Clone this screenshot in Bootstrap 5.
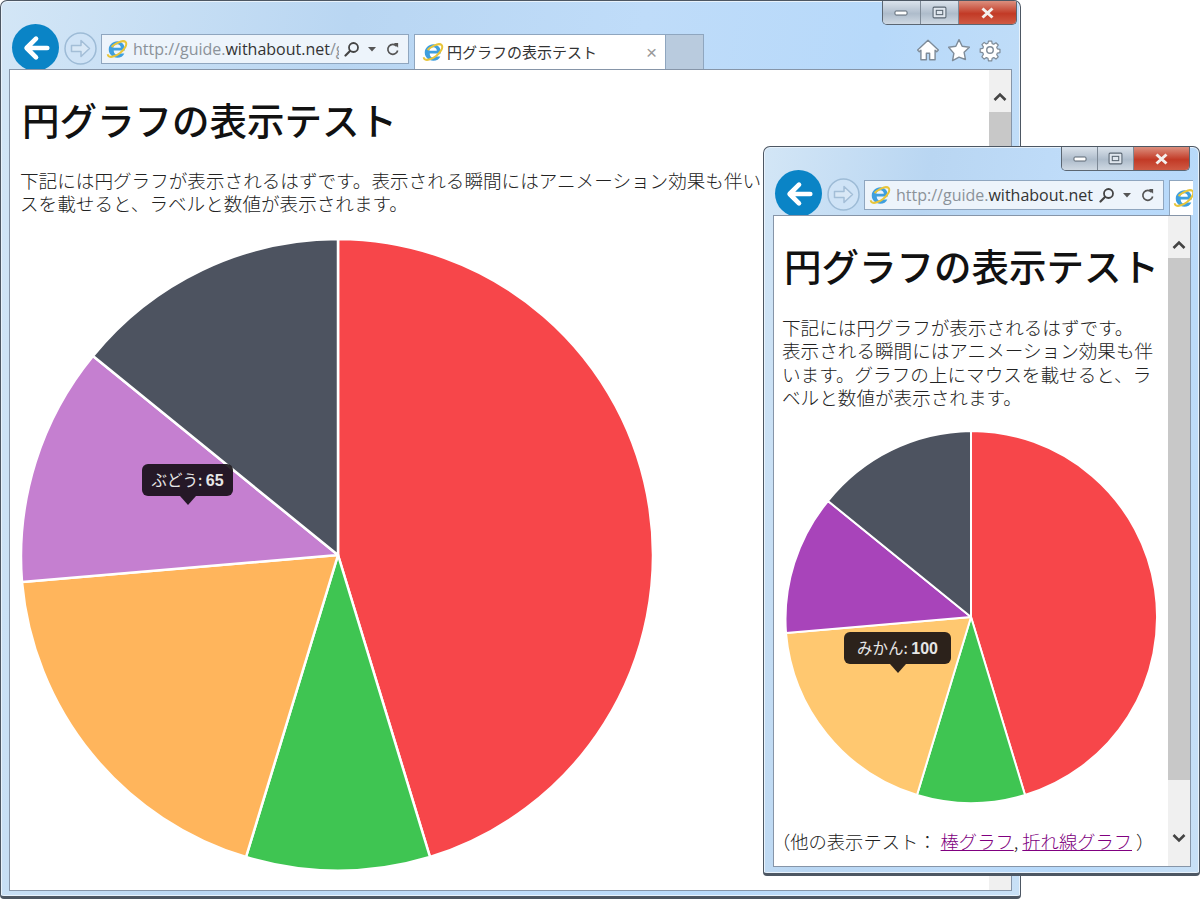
<!DOCTYPE html>
<html lang="ja">
<head>
<meta charset="utf-8">
<title>円グラフの表示テスト</title>
<link href="https://cdn.jsdelivr.net/npm/bootstrap@5.3.0/dist/css/bootstrap.min.css" rel="stylesheet">
<style>
html,body{margin:0;width:1200px;height:900px;overflow:hidden;background:#fff;font-family:"Noto Sans CJK JP","Liberation Sans",sans-serif;}
.ie-win{position:absolute;border:1px solid #4d5763;border-radius:7px 7px 4px 4px;border-bottom-width:3px;background:linear-gradient(100deg,#d3e6f6 0%,#b9d6f2 30%,#bfdcf9 55%,#b7d9fa 75%,#c8e0f6 100%);overflow:hidden;box-shadow:inset 0 0 0 1px #e8f2fb;}
.win-a{left:0;top:0;width:1021px;height:899px;z-index:1;}
.win-b{left:763px;top:146px;width:437px;height:730px;z-index:2;}
.ie-caption{position:absolute;top:0;display:flex;height:24px;border:1px solid #5b6672;border-top:0;border-radius:0 0 5px 5px;overflow:hidden;}
.win-a .ie-caption{right:3px;width:135px;}
.win-b .ie-caption{right:9px;width:129px;height:24px;}
.cap-btn{flex:1 1 0;display:flex;align-items:center;justify-content:center;background:linear-gradient(#dbe3ec,#aebccb 55%,#cfd9e3);border-right:1px solid #7d8996;}
.cap-close{flex:1.55 1 0;border-right:0;background:linear-gradient(#dc8f7e,#c23a26 55%,#cf5a44);}
.ie-bar{display:flex;align-items:flex-start;height:68px;padding:23px 0 0 11px;}
.ie-back{flex:none;width:47px;height:47px;border-radius:50%;background:#0a84c6;display:flex;align-items:center;justify-content:center;margin-right:5px;}
.ie-fwd{flex:none;width:33px;height:33px;margin:8px 4px 0 0;}
.ie-addr{flex:none;height:30px;margin-top:10px;display:flex;align-items:center;gap:5px;padding:0 8px 0 4px;background:#edf4fb;border:1px solid #8fa6bf;white-space:nowrap;overflow:hidden;font-family:"Open Sans","Liberation Sans",sans-serif;font-size:16px;color:#8b9299;}
.win-a .ie-addr{width:308px;}
.win-b .ie-addr{width:300px;}
.addr-url{flex:1 1 0;overflow:hidden;min-width:0;}
.addr-url b{font-weight:500;color:#333;}
.addr-find{margin-right:3px;}
.ie-tab{flex:none;height:35px;margin:10px 0 0 5px;background:#fff;border:1px solid #8fa6bf;border-bottom:0;display:flex;align-items:center;gap:3px;padding:0 8px 0 7px;overflow:hidden;font-size:15px;color:#333;white-space:nowrap;}
.win-a .ie-tab{width:252px;}
.win-b .ie-tab{width:24px;padding:0 3px;border-right:0;}
.tab-x{margin-left:auto;color:#999;font-size:19px;line-height:1;font-family:"Liberation Sans",sans-serif;}
.ie-stub{flex:none;width:38px;height:35px;margin-top:10px;background:#b9cbde;border:1px solid #8fa6bf;border-left:0;border-bottom:0;}
.ie-tools{margin-left:auto;display:flex;gap:7px;margin-top:14px;margin-right:18px;}
.ie-view{position:relative;z-index:1;display:flex;background:#fff;border:1px solid #8695a8;overflow:hidden;}
.win-a .ie-view{margin:0 8px;height:822px;}
.win-b .ie-view{margin:0 8px 0 9px;height:652px;}
.ie-page{flex:1 1 0;min-width:0;position:relative;color:#333;}
.win-a .ie-page{padding:23px 0 0 10px;}
.win-b .ie-page{padding:23px 0 0 8px;}
.pg-title{font-size:37.5px;line-height:52px;font-weight:500;color:#111;margin:0 0 23px 2px;white-space:nowrap;}
.win-b .pg-title{margin-bottom:24px;}
.pg-text{font-size:18.6px;line-height:23.3px;margin:0;white-space:nowrap;font-weight:300;color:#222;}
.pie-a{display:block;width:640px;height:640px;margin:20px 0 0 -2px;}
.pie-b{display:block;width:380px;height:380px;margin:19px 0 0 -1px;}
.pg-foot{font-size:18.3px;line-height:24px;margin:22px 0 0 -10px;white-space:nowrap;font-weight:300;color:#222;}
.pg-foot a{color:#800080;}
.ie-scroll{flex:none;width:22px;background:#f0f0f0;display:flex;flex-direction:column;align-items:center;}
.sb-thumb{width:100%;background:#c8c8c8;}
.win-a .sb-thumb{height:700px;margin-top:5px;}
.win-b .sb-thumb{height:522px;margin-top:3px;}
.sb-arrow{height:20px;}
.win-a .sb-arrow{margin-top:17px;}
.win-b .sb-arrow{margin-top:19px;}
.win-b .sb-arrow-down{margin-top:48px;}
.chart-tip{position:absolute;background:rgba(15,10,15,.88);color:#e6e6e6;border-radius:6px;font-size:15.5px;line-height:31px;text-align:center;white-space:nowrap;}
.chart-tip b{font-family:"Liberation Sans",sans-serif;font-weight:700;font-size:16px;}
.chart-tip::after{content:"";position:absolute;left:50%;bottom:-9px;margin-left:-8px;border:8px solid transparent;border-bottom:0;border-top:9px solid rgba(15,10,15,.88);}
.tip-a{left:132px;top:394px;width:91px;}
.tip-b{left:70px;top:416px;width:107px;}
</style>
</head>
<body>
<svg width="0" height="0" class="d-block" aria-hidden="true">
  <defs>
    <symbol id="ico-back" viewBox="0 0 32 32"><path d="M28 16H7M16 6 6 16l10 10" fill="none" stroke="#fff" stroke-width="5" stroke-linecap="round" stroke-linejoin="round"/></symbol>
    <symbol id="ico-fwd" viewBox="0 0 33 33"><circle cx="16.500" cy="16.500" r="15.500" fill="#cfe3f6" stroke="#9dbbd6" stroke-width="1.500"/><path d="M7.500 13.500h9.500V8.500l8.500 8-8.500 8v-5H7.500z" fill="#d9e8f6" stroke="#a3bed7" stroke-width="1.500" stroke-linejoin="round"/></symbol>
    <symbol id="ico-ie" viewBox="0 0 24 24"><path d="M3.500 13.500h17c.5-6-3.300-10-8.200-10S3 7.500 3 12.500 7 21.500 12.300 21.500c3.700 0 6.500-1.700 7.700-4.700h-5c-.7 1-1.500 1.300-2.600 1.300-2.500 0-4-1.700-4-4.600zM8 10.500C8.200 8.300 9.800 6.900 12.200 6.900s3.800 1.400 4 3.600z" fill="#3f9fde" fill-rule="evenodd"/><ellipse cx="12" cy="12" rx="12" ry="5.500" transform="rotate(-38 12 12)" fill="none" stroke="#e8c53a" stroke-width="2.200" stroke-dasharray="30 9 26 7"/></symbol>
    <symbol id="ico-find" viewBox="0 0 16 16"><circle cx="9.500" cy="6.500" r="4.500" fill="none" stroke="#444" stroke-width="1.800"/><path d="M6 10 1.500 14.500" stroke="#444" stroke-width="2.200" stroke-linecap="round"/></symbol>
    <symbol id="ico-drop" viewBox="0 0 8 8"><path d="M0 2h8L4 6.500z" fill="#555"/></symbol>
    <symbol id="ico-reload" viewBox="0 0 16 16"><path d="M12.500 4.500A5.300 5.300 0 1 0 13.500 9" fill="none" stroke="#555" stroke-width="1.800"/><path d="M9.500 1h4.500v5z" fill="#555"/></symbol>
    <symbol id="ico-home" viewBox="0 0 22 22"><path d="M11 2 1.500 11l1.500 1.500 1.500-1.300V20h5v-6h3v6h5v-8.800l1.500 1.300 1.500-1.500z" fill="#fff" stroke="#7f8c99" stroke-width="1.300" stroke-linejoin="round"/></symbol>
    <symbol id="ico-star" viewBox="0 0 22 22"><path d="m11 1.500 2.900 6.100 6.600.9-4.800 4.600 1.200 6.600L11 17.500l-5.900 3.200 1.200-6.600L1.500 8.500l6.600-.9z" fill="#fff" stroke="#7f8c99" stroke-width="1.300" stroke-linejoin="round"/></symbol>
    <symbol id="ico-gear" viewBox="0 0 22 22"><path d="M9.300 1.500h3.400l.5 2.700 1.700.7 2.300-1.600 2.400 2.400-1.600 2.300.7 1.700 2.700.5v3.400l-2.700.5-.7 1.700 1.600 2.300-2.400 2.400-2.300-1.600-1.700.7-.5 2.700H9.300l-.5-2.700-1.700-.7-2.300 1.600-2.400-2.400L4 15.400l-.7-1.700-2.700-.5v-3.400l2.700-.5.7-1.700-1.600-2.300 2.400-2.400 2.300 1.600 1.700-.7z" transform="translate(1.500 1.500) scale(.87)" fill="#fff" stroke="#7f8c99" stroke-width="1.300" stroke-linejoin="round"/><circle cx="11" cy="11" r="3" fill="none" stroke="#7f8c99" stroke-width="1.300"/></symbol>
    <symbol id="ico-up" viewBox="0 0 14 10"><path d="M1.500 8 7 2.500 12.500 8" fill="none" stroke="#444" stroke-width="2.600"/></symbol>
    <symbol id="ico-down" viewBox="0 0 14 10"><path d="M1.500 2 7 7.500 12.500 2" fill="none" stroke="#444" stroke-width="2.600"/></symbol>
    <symbol id="ico-min" viewBox="0 0 14 8"><rect x="1" y="2" width="12" height="4" rx="1" fill="#fff" stroke="#5a6672"/></symbol>
    <symbol id="ico-max" viewBox="0 0 14 12"><rect x="1" y="1" width="12" height="10" rx="1" fill="#dfe6ee" stroke="#5a6672"/><rect x="4" y="4" width="6" height="4" fill="none" stroke="#5a6672"/></symbol>
    <symbol id="ico-close" viewBox="0 0 14 12"><path d="M2 1.500 12 10.500M12 1.500 2 10.500" stroke="#f4f0ee" stroke-width="3"/></symbol>
  </defs>
</svg>

<div class="ie-win win-a">
  <div class="ie-caption">
    <div class="cap-btn"><svg width="16" height="8"><use href="#ico-min"/></svg></div>
    <div class="cap-btn"><svg width="15" height="13"><use href="#ico-max"/></svg></div>
    <div class="cap-btn cap-close"><svg width="15" height="12"><use href="#ico-close"/></svg></div>
  </div>
  <div class="ie-bar">
    <div class="ie-back"><svg width="30" height="30"><use href="#ico-back"/></svg></div>
    <svg class="ie-fwd"><use href="#ico-fwd"/></svg>
    <div class="ie-addr">
      <svg width="22" height="22" class="flex-shrink-0"><use href="#ico-ie"/></svg>
      <span class="addr-url">http://guide.<b>withabout.net</b>/g</span>
      <svg width="16" height="16" class="addr-find"><use href="#ico-find"/></svg>
      <svg width="8" height="8"><use href="#ico-drop"/></svg>
      <svg width="15" height="15" class="ms-1"><use href="#ico-reload"/></svg>
    </div>
    <div class="ie-tab">
      <svg width="22" height="22" class="flex-shrink-0"><use href="#ico-ie"/></svg>
      <span>円グラフの表示テスト</span>
      <span class="tab-x">×</span>
    </div>
    <div class="ie-stub"></div>
    <div class="ie-tools">
      <svg width="24" height="24"><use href="#ico-home"/></svg>
      <svg width="24" height="24"><use href="#ico-star"/></svg>
      <svg width="24" height="24"><use href="#ico-gear"/></svg>
    </div>
  </div>
  <div class="ie-view">
    <div class="ie-page">
      <h1 class="pg-title">円グラフの表示テスト</h1>
      <p class="pg-text">下記には円グラフが表示されるはずです。表示される瞬間にはアニメーション効果も伴います。グラフの上にマウ<br>スを載せると、ラベルと数値が表示されます。</p>
      <svg class="pie-a" viewBox="0 0 640 640">
        <g stroke="#fff" stroke-width="2.500" stroke-linejoin="round">
          <path d="M320 320V4A316 316 0 0 1 412 622Z" fill="#f7464a"/>
          <path d="M320 320 412 622A316 316 0 0 1 228 622Z" fill="#3fc552"/>
          <path d="M320 320 228 622A316 316 0 0 1 4 347Z" fill="#ffb55c"/>
          <path d="M320 320 4 347A316 316 0 0 1 75 121Z" fill="#c57fd0"/>
          <path d="M320 320 75 121A316 316 0 0 1 320 4Z" fill="#4d5360"/>
        </g>
      </svg>
      <div class="chart-tip tip-a">ぶどう: <b>65</b></div>
    </div>
    <div class="ie-scroll">
      <svg class="sb-arrow" width="14" height="10"><use href="#ico-up"/></svg>
      <div class="sb-thumb"></div>
    </div>
  </div>
</div>

<div class="ie-win win-b">
  <div class="ie-caption">
    <div class="cap-btn"><svg width="16" height="8"><use href="#ico-min"/></svg></div>
    <div class="cap-btn"><svg width="15" height="13"><use href="#ico-max"/></svg></div>
    <div class="cap-btn cap-close"><svg width="15" height="12"><use href="#ico-close"/></svg></div>
  </div>
  <div class="ie-bar">
    <div class="ie-back"><svg width="30" height="30"><use href="#ico-back"/></svg></div>
    <svg class="ie-fwd"><use href="#ico-fwd"/></svg>
    <div class="ie-addr">
      <svg width="22" height="22" class="flex-shrink-0"><use href="#ico-ie"/></svg>
      <span class="addr-url">http://guide.<b>withabout.net</b></span>
      <svg width="16" height="16" class="addr-find"><use href="#ico-find"/></svg>
      <svg width="8" height="8"><use href="#ico-drop"/></svg>
      <svg width="15" height="15" class="ms-1"><use href="#ico-reload"/></svg>
    </div>
    <div class="ie-tab"><svg width="22" height="22" class="flex-shrink-0"><use href="#ico-ie"/></svg></div>
  </div>
  <div class="ie-view">
    <div class="ie-page">
      <h1 class="pg-title">円グラフの表示テスト</h1>
      <p class="pg-text">下記には円グラフが表示されるはずです。<br>表示される瞬間にはアニメーション効果も伴<br>います。グラフの上にマウスを載せると、ラ<br>ベルと数値が表示されます。</p>
      <svg class="pie-b" viewBox="0 0 380 380">
        <g stroke="#fff" stroke-width="2" stroke-linejoin="round">
          <path d="M190 190V4A186 186 0 0 1 244 368Z" fill="#f7464a"/>
          <path d="M190 190 244 368A186 186 0 0 1 136 368Z" fill="#3fc552"/>
          <path d="M190 190 136 368A186 186 0 0 1 5 206Z" fill="#ffc870"/>
          <path d="M190 190 5 206A186 186 0 0 1 47 74Z" fill="#a844ba"/>
          <path d="M190 190 47 74A186 186 0 0 1 190 4Z" fill="#4d5360"/>
        </g>
      </svg>
      <p class="pg-foot">（他の表示テスト： <a href="#">棒グラフ</a>, <a href="#">折れ線グラフ</a> ）</p>
      <div class="chart-tip tip-b">みかん: <b>100</b></div>
    </div>
    <div class="ie-scroll">
      <svg class="sb-arrow" width="14" height="10"><use href="#ico-up"/></svg>
      <div class="sb-thumb"></div>
      <svg class="sb-arrow sb-arrow-down" width="14" height="10"><use href="#ico-down"/></svg>
    </div>
  </div>
</div>
<script src="https://cdn.jsdelivr.net/npm/bootstrap@5.3.0/dist/js/bootstrap.bundle.min.js"></script>
</body>
</html>
